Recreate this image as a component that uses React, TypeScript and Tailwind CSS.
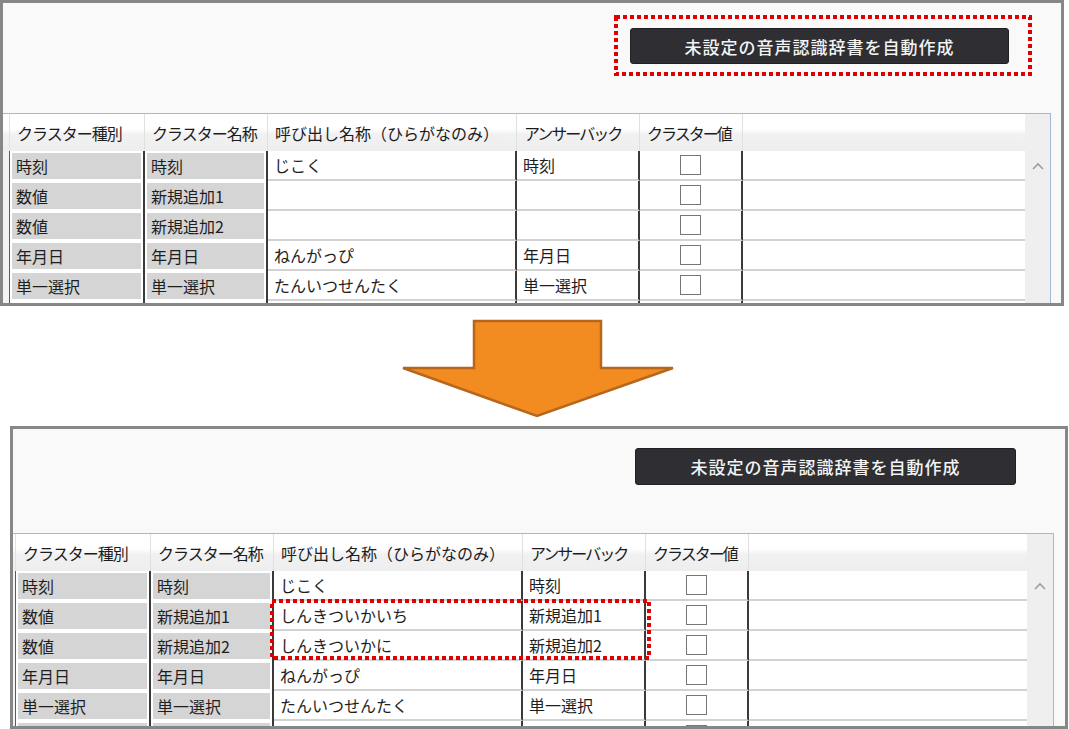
import React from "react";

type Row = { a: string; b: string; c: string; d: string };

const topRows: Row[] = [
  { a: "時刻", b: "時刻", c: "じこく", d: "時刻" },
  { a: "数値", b: "新規追加1", c: "", d: "" },
  { a: "数値", b: "新規追加2", c: "", d: "" },
  { a: "年月日", b: "年月日", c: "ねんがっぴ", d: "年月日" },
  { a: "単一選択", b: "単一選択", c: "たんいつせんたく", d: "単一選択" },
  { a: "", b: "", c: "", d: "" },
];

const bottomRows: Row[] = [
  { a: "時刻", b: "時刻", c: "じこく", d: "時刻" },
  { a: "数値", b: "新規追加1", c: "しんきついかいち", d: "新規追加1" },
  { a: "数値", b: "新規追加2", c: "しんきついかに", d: "新規追加2" },
  { a: "年月日", b: "年月日", c: "ねんがっぴ", d: "年月日" },
  { a: "単一選択", b: "単一選択", c: "たんいつせんたく", d: "単一選択" },
  { a: "", b: "", c: "", d: "" },
];

const headers: { t: string; w: string; tr: string }[] = [
  { t: "クラスター種別", w: "w-[135px]", tr: "tracking-[-1px]" },
  { t: "クラスター名称", w: "w-[123px]", tr: "tracking-[-1px]" },
  { t: "呼び出し名称（ひらがなのみ）", w: "w-[249px]", tr: "tracking-[0px]" },
  { t: "アンサーバック", w: "w-[123px]", tr: "tracking-[-2px]" },
  { t: "クラスター値", w: "w-[103px]", tr: "tracking-[-2px]" },
];

function GrayCell({ w, text }: { w: string; text: string }) {
  return (
    <div className={`${w} shrink-0 h-full border-r-2 border-[#3a3a3a] bg-white p-[2px]`}>
      <div className="h-full bg-[#d5d5d5] flex items-center pl-[4px] whitespace-nowrap">{text}</div>
    </div>
  );
}

function WhiteCell({ w, text }: { w: string; text: string }) {
  return (
    <div className={`${w} shrink-0 h-full border-r-2 border-b-2 border-r-[#3a3a3a] border-b-[#d2d2d2] bg-white flex items-center pl-[6px] whitespace-nowrap`}>
      {text}
    </div>
  );
}

function Table({ rows, rh, sb }: { rows: Row[]; rh: string; sb: string }) {
  return (
    <div className="flex flex-1 min-h-0 border-t border-r border-[#a3b9d3] overflow-hidden">
      <div className="flex flex-col flex-1 min-w-0">
        <div className="flex h-[37px] shrink-0 bg-[linear-gradient(to_bottom,#ffffff_0%,#ffffff_40%,#f1f1f2_55%,#eeeeef_100%)]">
          <div className={`${rh} shrink-0 border-r border-[#e2e2e2]`} />
          {headers.map((h) => (
            <div
              key={h.t}
              className={`${h.w} ${h.tr} shrink-0 border-r border-[#e0e0e0] flex items-center pl-[7px] whitespace-nowrap text-[#1c1c1c]`}
            >
              {h.t}
            </div>
          ))}
          <div className="flex-1" />
        </div>
        {rows.map((r, i) => (
          <div key={i} className="flex h-[30px] shrink-0 text-[#1e1e1e]">
            <div className={`${rh} shrink-0 h-full bg-[#f3f3f3] border-r border-[#5a5a5a]`} />
            <GrayCell w="w-[135px]" text={r.a} />
            <GrayCell w="w-[123px]" text={r.b} />
            <WhiteCell w="w-[249px]" text={r.c} />
            <WhiteCell w="w-[123px]" text={r.d} />
            <div className="w-[103px] shrink-0 h-full border-r-2 border-b-2 border-r-[#3a3a3a] border-b-[#d2d2d2] bg-white flex items-center justify-center">
              <div className="w-[21px] h-[20px] border border-[#767676] bg-white" />
            </div>
            <div className="flex-1 h-full border-b-2 border-[#d2d2d2] bg-white" />
          </div>
        ))}
      </div>
      <div className={`${sb} shrink-0 bg-[#efefef] flex justify-center pt-[48px]`}>
        <svg width="12" height="8" viewBox="0 0 12 8">
          <polyline points="1,7 6,2 11,7" fill="none" stroke="#9d9d9d" strokeWidth="1.6" />
        </svg>
      </div>
    </div>
  );
}

function Dotted({ w, h }: { w: number; h: number }) {
  return (
    <svg width={w} height={h} viewBox={`0 0 ${w} ${h}`}>
      <rect
        x="2"
        y="2"
        width={w - 4}
        height={h - 4}
        fill="none"
        stroke="#e00000"
        strokeWidth="4"
        strokeDasharray="4 3"
      />
    </svg>
  );
}

export default function App() {
  return (
    <div className="w-[1069px] h-[729px] bg-white overflow-hidden flex flex-col font-['Noto_Sans_CJK_JP','Noto_Sans',sans-serif] text-[16px] leading-none">
      {/* Top panel */}
      <div className="relative w-[1064px] h-[306px] shrink-0 border-[3px] border-[#878787] bg-[#f9f9f9] flex flex-col">
        <div className="h-[110px] shrink-0 flex justify-end items-start pt-[25px] pr-[52px]">
          <div className="w-[379px] h-[36px] rounded-[3px] bg-[#2e2e33] border border-[#1f1f24] flex items-center justify-center text-[17px] tracking-[1px] text-[#f3f3f3] font-medium">
            未設定の音声認識辞書を自動作成
          </div>
        </div>
        <div className="flex flex-1 min-h-0 pr-[10px]">
          <Table rows={topRows} rh="w-[7px]" sb="w-[25px]" />
        </div>
        <div className="absolute left-[611px] top-[12px]">
          <Dotted w={418} h={61} />
        </div>
      </div>

      {/* Arrow */}
      <div className="h-[120px] shrink-0 pt-[12px] pl-[400px]">
        <svg width="278" height="102" viewBox="0 0 278 102">
          <polygon
            points="74,3 201,3 201,50 273,50 137,98 3,50 74,50"
            fill="#f28b20"
            stroke="#b7661c"
            strokeWidth="2.5"
            strokeLinejoin="miter"
          />
        </svg>
      </div>

      {/* Bottom panel */}
      <div className="relative ml-[10px] w-[1058px] h-[303px] shrink-0 border-[3px] border-[#878787] bg-[#f9f9f9] flex flex-col">
        <div className="h-[104px] shrink-0 flex justify-end items-start pt-[19px] pr-[49px]">
          <div className="w-[381px] h-[37px] rounded-[3px] bg-[#2e2e33] border border-[#1f1f24] flex items-center justify-center text-[17px] tracking-[1px] text-[#f3f3f3] font-medium">
            未設定の音声認識辞書を自動作成
          </div>
        </div>
        <div className="flex flex-1 min-h-0 pr-[11px]">
          <Table rows={bottomRows} rh="w-[3px]" sb="w-[26px]" />
        </div>
        <div className="absolute left-[257px] top-[170px]">
          <Dotted w={381} h={61} />
        </div>
      </div>
    </div>
  );
}
